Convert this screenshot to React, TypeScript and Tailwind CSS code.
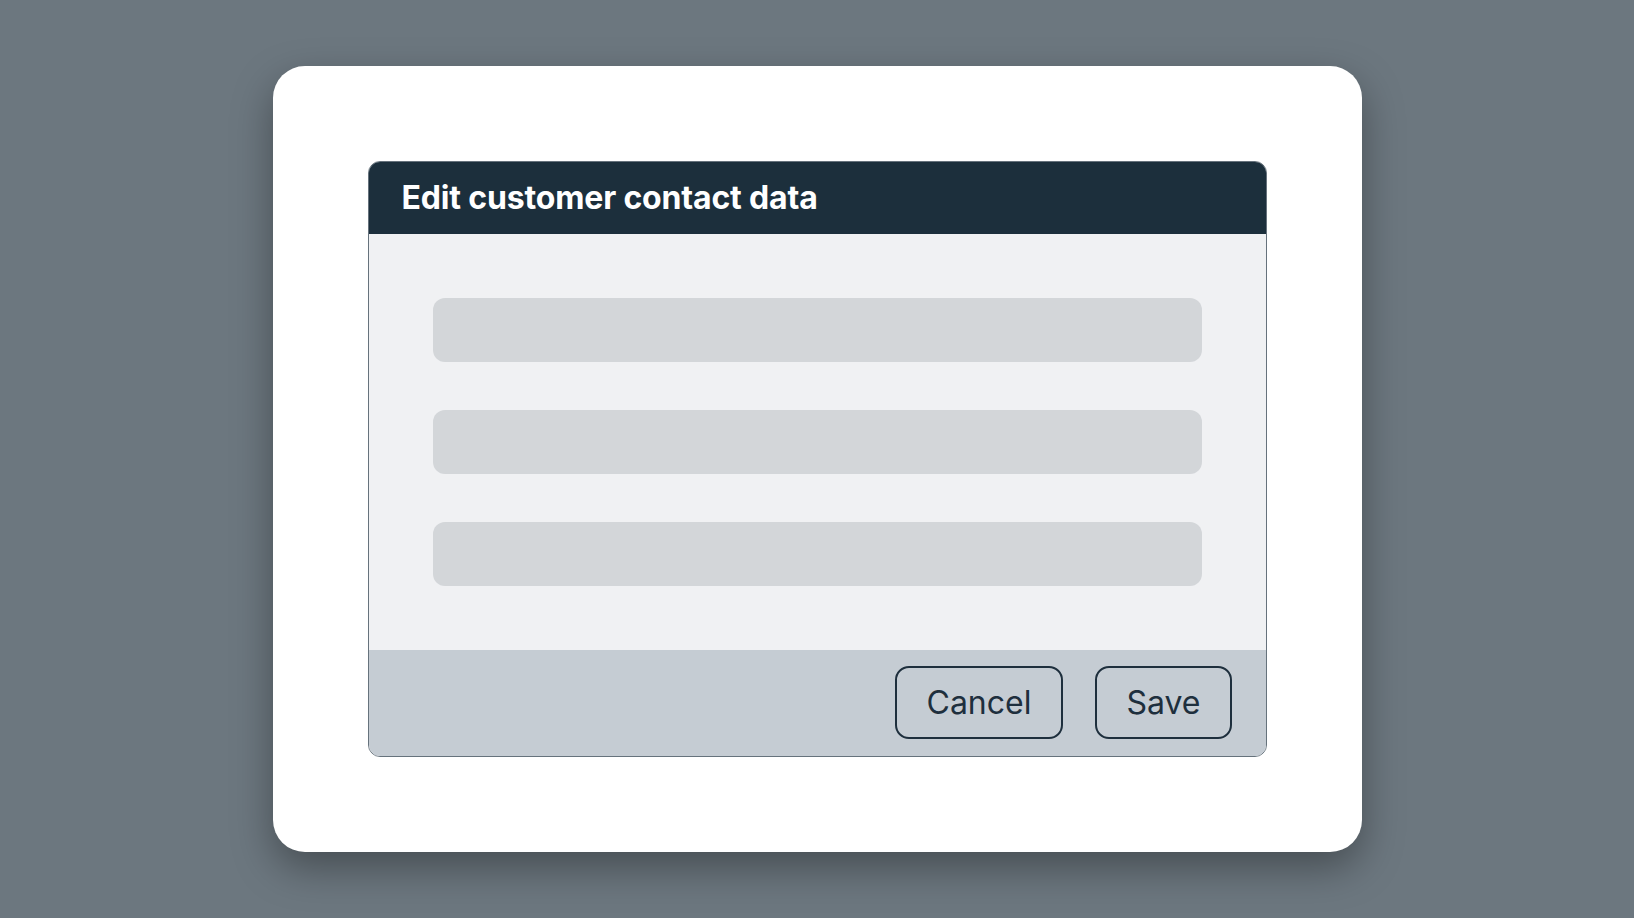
import React from "react";

export default function App() {
  return (
    <div
      className="w-full h-screen flex items-center justify-center bg-[#6c777f]"
      style={{ fontFamily: "Inter, 'Noto Sans', sans-serif" }}
    >
      <div className="bg-white rounded-[32px] p-[95px] shadow-[0_16px_40px_rgba(0,0,0,0.35)]">
        <div className="w-[899px] rounded-[12px] border border-[#66727c] overflow-hidden flex flex-col">
          <div className="h-[72px] bg-[#1c2f3c] flex items-center px-[33px]">
            <h1 className="text-white text-[32px] font-bold tracking-[-0.005em] leading-none">
              Edit customer contact data
            </h1>
          </div>
          <div className="bg-[#f0f1f3] px-[64px] py-[64px] flex flex-col gap-[48px]">
            <div className="h-[64px] rounded-[12px] bg-[#d3d6d9]" />
            <div className="h-[64px] rounded-[12px] bg-[#d3d6d9]" />
            <div className="h-[64px] rounded-[12px] bg-[#d3d6d9]" />
          </div>
          <div className="bg-[#c5ccd3] flex justify-end gap-[32px] pt-[16px] pb-[17px] pr-[34px]">
            <button className="h-[73px] px-[30px] rounded-[14px] border-2 border-[#1e2f3d] text-[#1e2f3d] text-[32px] leading-none">
              Cancel
            </button>
            <button className="h-[73px] px-[29px] rounded-[14px] border-2 border-[#1e2f3d] text-[#1e2f3d] text-[32px] leading-none">
              Save
            </button>
          </div>
        </div>
      </div>
    </div>
  );
}
